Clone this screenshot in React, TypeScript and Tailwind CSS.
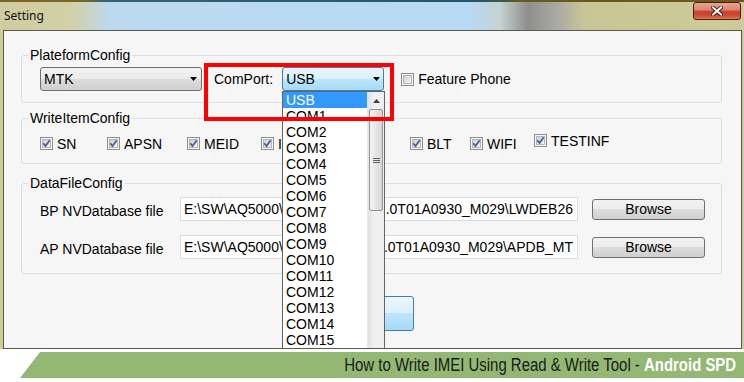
import React from "react";

function CheckBox({ checked }: { checked: boolean }) {
  return (
    <svg width="13" height="13" viewBox="0 0 13 13" className="shrink-0">
      <defs>
        <linearGradient id="cbgrad" x1="0" y1="0" x2="1" y2="1">
          <stop offset="0" stopColor="#c9cdd3" />
          <stop offset="1" stopColor="#f8f8f8" />
        </linearGradient>
      </defs>
      <rect x="0.5" y="0.5" width="12" height="12" fill="#f6f6f6" stroke="#8f8f8f" />
      <rect x="2.5" y="2.5" width="8" height="8" fill="url(#cbgrad)" stroke="#b3b7bd" />
      {checked && (
        <path d="M3.3 6.3 L5.5 9 L9.7 3.3" fill="none" stroke="#4a5f97" strokeWidth="1.8" />
      )}
    </svg>
  );
}

function Arrow() {
  return (
    <svg width="7" height="4" viewBox="0 0 7 4" className="shrink-0">
      <path d="M0 0 H7 L3.5 4 Z" fill="#000" />
    </svg>
  );
}

function Item({ label, w, checked = true, extra = "" }: { label: string; w: number; checked?: boolean; extra?: string }) {
  return (
    <div className={`flex items-center h-[13px] gap-[4px] ${extra}`} style={{ width: w }}>
      <CheckBox checked={checked} />
      <span className="leading-[16px] whitespace-nowrap">{label}</span>
    </div>
  );
}

export default function App() {
  const items = ["USB", ...Array.from({ length: 15 }, (_, i) => `COM${i + 1}`)];
  return (
    <div className="w-[744px] h-[382px] overflow-hidden bg-white font-['Liberation_Sans',Arial,sans-serif] text-[14px] text-black">
      {/* window */}
      <div className="h-[349px] flex flex-col bg-[linear-gradient(90deg,#cfcc9f_0px,#d2d0a6_70px,#bcd9f0_112px,#b8d8f4_470px,#c6d2d2_500px,#8e8e8e_528px,#a9a9a2_556px,#c8c696_585px,#cdcb98_744px)]">
        <div className="h-[2px] bg-[linear-gradient(90deg,#7a6526_0px,#7a6526_86px,#2e6670_104px,#1d5a66_480px,#3f5c40_505px,#6c5a1a_520px,#6c5a1a_744px)]" />
        <div className="h-[28px] flex items-start justify-between">
          <div className="h-[28px] flex items-center pl-[4px] font-['Noto_Sans',sans-serif] text-[12px] text-[#111]">
            Setting
          </div>
          <div className="mr-[3px] w-[48px] h-[18px] rounded-[3px] border border-[#4f1a10] bg-[linear-gradient(to_bottom,#e8a593_0%,#dc8a74_40%,#c8412a_55%,#cf4d30_80%,#e27a58_100%)] flex items-center justify-center">
            <svg width="12" height="10" viewBox="0 0 12 10">
              <path d="M2 1.5 L10 8.5 M10 1.5 L2 8.5" stroke="#3a1a10" strokeWidth="3.8" strokeLinecap="square" />
              <path d="M2 1.5 L10 8.5 M10 1.5 L2 8.5" stroke="#ffffff" strokeWidth="2" strokeLinecap="square" />
            </svg>
          </div>
        </div>

        {/* client */}
        <div className="ml-[3px] w-[739px] h-[319px] border border-[#5b5b4b] bg-[#f6f6f6] relative overflow-hidden flex flex-col">
          {/* PlateformConfig */}
          <div className="relative mt-[24px] ml-[17px] w-[701px] h-[48px] shrink-0 border border-[#d5dfe5] rounded-[3px] pt-[11px] pl-[18px]">
            <span className="absolute -top-[9px] left-[6px] px-[2px] bg-[#f6f6f6] leading-[16px]">PlateformConfig</span>
            <div className="flex items-center h-[24px]">
              <div className="w-[162px] h-[24px] rounded-[3px] border border-[#707070] bg-[linear-gradient(to_bottom,#f2f2f2_0%,#ebebeb_50%,#dddddd_50%,#cfcfcf_100%)] flex items-center justify-between pl-[3px] pr-[4px]">
                <span className="leading-[16px]">MTK</span>
                <Arrow />
              </div>
              <span className="ml-[12px] leading-[16px]">ComPort:</span>
              <div className="ml-[9px] w-[102px] h-[24px] rounded-[3px] border border-[#3c7fb1] bg-[linear-gradient(to_bottom,#eaf6fd_0%,#d9f0fc_50%,#bee6fd_50%,#a7d9f5_100%)] flex items-center justify-between pl-[3px] pr-[3px]">
                <span className="leading-[16px]">USB</span>
                <Arrow />
              </div>
              <div className="ml-[17px] flex items-center gap-[4px]">
                <CheckBox checked={false} />
                <span className="leading-[16px]">Feature Phone</span>
              </div>
            </div>
          </div>

          {/* WriteItemConfig */}
          <div className="relative mt-[15px] ml-[17px] w-[701px] h-[46px] shrink-0 border border-[#d5dfe5] rounded-[3px] pt-[18px] pl-[18px]">
            <span className="absolute -top-[9px] left-[6px] px-[2px] bg-[#f6f6f6] leading-[16px]">WriteItemConfig</span>
            <div className="flex items-start">
              <Item label="SN" w={67} />
              <Item label="APSN" w={80} />
              <Item label="MEID" w={74} />
              <Item label="IMEI" w={149} />
              <Item label="BLT" w={60} />
              <Item label="WIFI" w={64} />
              <Item label="TESTINF" w={80} extra="-mt-[3px]" />
            </div>
          </div>

          {/* DataFileConfig */}
          <div className="relative mt-[19px] ml-[17px] w-[701px] h-[91px] shrink-0 border border-[#d5dfe5] rounded-[3px] pt-[13px] pl-[18px] flex flex-col gap-[14px]">
            <span className="absolute -top-[9px] left-[6px] px-[2px] bg-[#f6f6f6] leading-[16px]">DataFileConfig</span>
            {[
              ["BP NVDatabase file", ".0T01A0930_M029\\LWDEB26"],
              ["AP NVDatabase file", ".0T01A0930_M029\\APDB_MT"],
            ].map(([label, tail]) => (
              <div key={label} className="flex items-center h-[24px]">
                <span className="w-[140px] leading-[16px] pt-[4px]">{label}</span>
                <div className="w-[398px] h-[24px] border border-[#d9dde2] bg-white flex items-center justify-between pl-[3px] pr-[4px] overflow-hidden whitespace-nowrap">
                  <span className="leading-[16px]">E:\SW\AQ5000\</span>
                  <span className="leading-[16px]">{tail}</span>
                </div>
                <div className="ml-[14px] w-[113px] h-[21px] rounded-[3px] border border-[#707070] bg-[linear-gradient(to_bottom,#f2f2f2_0%,#ebebeb_50%,#dddddd_50%,#cfcfcf_100%)] flex items-center justify-center leading-[16px]">
                  Browse
                </div>
              </div>
            ))}
          </div>

          {/* OK button */}
          <div className="mt-[22px] ml-[326px] w-[84px] h-[35px] shrink-0 rounded-[3px] border border-[#3c7fb1] bg-[linear-gradient(to_bottom,#eaf6fd_0%,#d9f0fc_50%,#bee6fd_50%,#a7d9f5_100%)] flex items-center justify-center">
            OK
          </div>

          {/* dropdown list overlay */}
          <div className="absolute left-[278px] top-[60px] w-[103px] h-[300px] border border-[#646464] bg-white flex">
            <div className="w-[84px] flex flex-col">
              {items.map((t, i) => (
                <div
                  key={t}
                  className={`h-[16px] leading-[16px] pl-[3px] whitespace-nowrap ${i === 0 ? "bg-[#3399ff] text-white" : ""}`}
                >
                  {t}
                </div>
              ))}
            </div>
            <div className="w-[17px] flex flex-col bg-[linear-gradient(90deg,#e2e2e2,#f1f1f1_40%,#eeeeee)] border-l border-[#e8e8e8]">
              <div className="h-[17px] flex items-center justify-center">
                <svg width="7" height="4" viewBox="0 0 7 4">
                  <path d="M0 4 H7 L3.5 0 Z" fill="#404040" />
                </svg>
              </div>
              <div className="mx-[1px] h-[102px] rounded-[2px] border border-[#979797] bg-[linear-gradient(90deg,#f4f4f4,#e6e6e6_50%,#d6d6d6)] flex flex-col items-center justify-center gap-[1px]">
                <div className="w-[7px] h-[1px] bg-[#606060]" />
                <div className="w-[7px] h-[1px] bg-[#606060]" />
                <div className="w-[7px] h-[1px] bg-[#606060]" />
              </div>
            </div>
          </div>

          {/* red highlight box */}
          <div className="absolute left-[200px] top-[32px] w-[190px] h-[58px] border-[4px] border-[#ff0000]" />
        </div>
      </div>

      {/* banner */}
      <div className="h-[33px] pt-[3px]">
        <div className="ml-[20px] h-[26px] bg-[#93b874] [clip-path:polygon(20px_0,100%_0,100%_100%,0_100%)] flex items-center justify-end pr-[8px] whitespace-nowrap">
          <div className="origin-right scale-x-[0.83] font-['Liberation_Sans',Arial,sans-serif] text-[18px] leading-[20px] whitespace-nowrap">
            <span className="text-[#1a1a1a]">How to Write IMEI Using Read &amp; Write Tool -&nbsp;</span>
            <span className="text-white font-bold">Android SPD</span>
          </div>
        </div>
      </div>
    </div>
  );
}
